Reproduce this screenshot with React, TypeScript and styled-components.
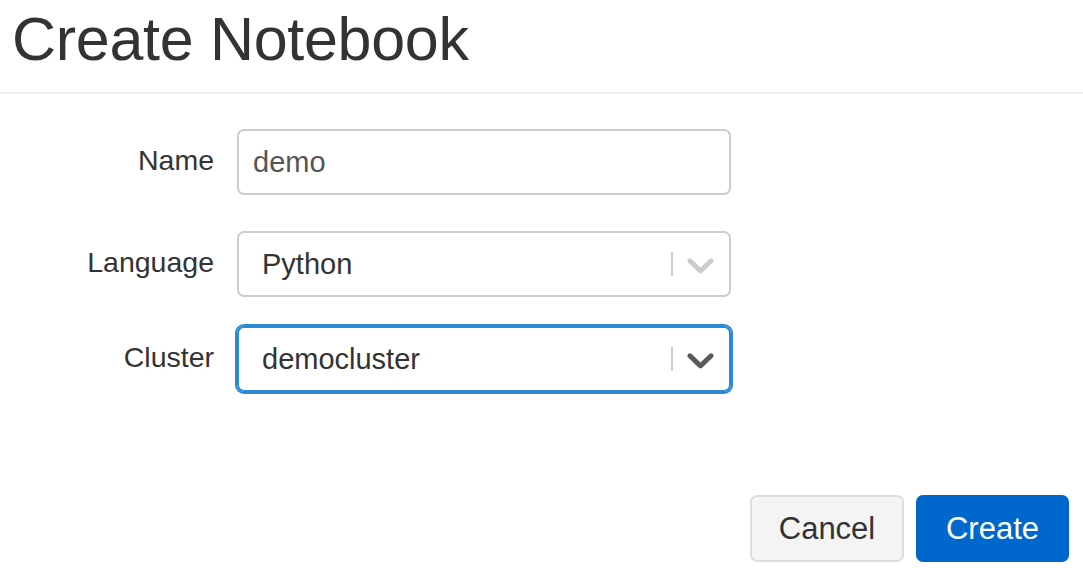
import styled, { createGlobalStyle, css } from 'styled-components';

const GlobalStyle = createGlobalStyle`
    html, body {
        margin: 0;
        padding: 0;
        background: #fff;
    }
    body {
        font-family: 'Liberation Sans', Arial, sans-serif;
        color: #333;
    }
`;

const Page = styled.div`
    width: 1083px;
    height: 587px;
    display: flex;
    flex-direction: column;
    overflow: hidden;
`;

const Header = styled.div`
    padding: 5px 14px 19px 12px;
    border-bottom: 2px solid #eeeeee;
`;

const Title = styled.h1`
    margin: 0;
    font-size: 61px;
    line-height: 68px;
    font-weight: 400;
    letter-spacing: -0.3px;
    color: #333;
`;

const Form = styled.div`
    display: flex;
    flex-direction: column;
    padding-top: 35px;
`;

const Row = styled.div<{ $gap: number }>`
    display: grid;
    grid-template-columns: 214px 494px;
    column-gap: 23px;
    margin-bottom: ${(p) => p.$gap}px;
`;

const Label = styled.label`
    text-align: right;
    font-size: 28.5px;
    line-height: 34px;
    padding-top: 14px;
    color: #333;
`;

const TextInput = styled.div`
    height: 66px;
    box-sizing: border-box;
    border: 2px solid #cccccc;
    border-radius: 7px;
    padding: 0 14px;
    display: flex;
    align-items: center;
    font-size: 29px;
    color: #555;
`;

const SelectBox = styled.div<{ $focused?: boolean }>`
    height: 66px;
    box-sizing: border-box;
    border: 2px solid #cccccc;
    border-radius: 7px;
    display: flex;
    align-items: center;
    ${(p) =>
        p.$focused &&
        css`
            border-color: #2b8ad8;
            box-shadow: 0 0 0 2px #2b8ad8;
        `}
`;

const SelectValue = styled.div`
    flex: 1;
    padding-left: 23px;
    font-size: 29px;
    color: #333;
`;

const Separator = styled.span`
    align-self: stretch;
    width: 2px;
    margin: 19px 0;
    background: #cccccc;
`;

const Indicator = styled.div<{ $focused?: boolean }>`
    display: flex;
    align-items: center;
    padding: 0 6px 0 5px;
    color: ${(p) => (p.$focused ? '#5a5a5a' : '#cccccc')};

    svg {
        width: 45px;
        height: 45px;
        display: block;
    }
`;

const Footer = styled.div`
    margin-top: auto;
    display: flex;
    justify-content: flex-end;
    gap: 12px;
    padding: 0 14px 25px;
`;

const Button = styled.button<{ $primary?: boolean }>`
    width: ${(p) => (p.$primary ? 153 : 154)}px;
    height: 67px;
    box-sizing: border-box;
    border-radius: 7px;
    font-family: 'Liberation Sans', Arial, sans-serif;
    font-size: 31px;
    cursor: pointer;
    border: 2px solid ${(p) => (p.$primary ? '#0066cc' : '#dddddd')};
    background: ${(p) => (p.$primary ? '#0068cc' : '#f4f4f4')};
    color: ${(p) => (p.$primary ? '#fff' : '#333')};
`;

const Chevron = () => (
    <svg viewBox="0 0 20 20" fill="currentColor" aria-hidden="true">
        <path d="M4.516 7.548c0.436-0.446 1.043-0.481 1.576 0l3.908 3.747 3.908-3.747c0.533-0.481 1.141-0.446 1.574 0 0.436 0.445 0.408 1.197 0 1.615-0.406 0.418-4.695 4.502-4.695 4.502-0.217 0.223-0.502 0.335-0.787 0.335s-0.57-0.112-0.789-0.335c0 0-4.287-4.084-4.695-4.502s-0.436-1.17 0-1.615z" />
    </svg>
);

const Select = ({ value, focused }: { value: string; focused?: boolean }) => (
    <SelectBox $focused={focused}>
        <SelectValue>{value}</SelectValue>
        <Separator />
        <Indicator $focused={focused}>
            <Chevron />
        </Indicator>
    </SelectBox>
);

export default function App() {
    return (
        <Page>
            <GlobalStyle />
            <Header>
                <Title>Create Notebook</Title>
            </Header>
            <Form>
                <Row $gap={36}>
                    <Label>Name</Label>
                    <TextInput>demo</TextInput>
                </Row>
                <Row $gap={29}>
                    <Label>Language</Label>
                    <Select value="Python" />
                </Row>
                <Row $gap={0}>
                    <Label>Cluster</Label>
                    <Select value="democluster" focused />
                </Row>
            </Form>
            <Footer>
                <Button>Cancel</Button>
                <Button $primary>Create</Button>
            </Footer>
        </Page>
    );
}
